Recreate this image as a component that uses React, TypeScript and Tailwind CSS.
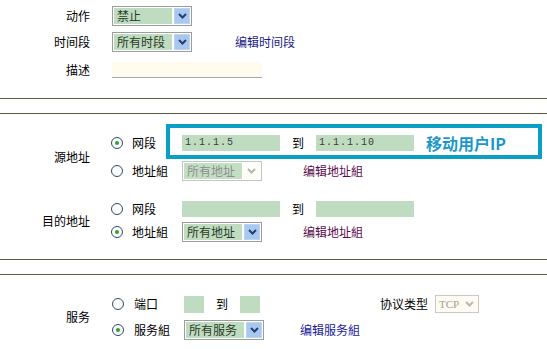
import React from 'react';

const FONT = { fontFamily: '"Noto Sans CJK SC", "Liberation Sans", sans-serif' };

function Chevron({ color }: { color: string }) {
  return (
    <svg width="9" height="6" viewBox="0 0 9 6">
      <path d="M1 1 L4.5 4.5 L8 1" fill="none" stroke={color} strokeWidth="2" />
    </svg>
  );
}

function Select({ text, w, disabled }: { text: string; w: string; disabled?: boolean }) {
  if (disabled) {
    return (
      <div className={`${w} h-[20px] flex border border-[#c4c4c4] bg-white p-px`}>
        <div className="flex-1 bg-[#c3dec3] pl-[3px] text-[#8e8e8e] leading-[16px]">{text}</div>
        <div className="w-[17px] ml-px flex items-center justify-center bg-[#fdfcf6]">
          <Chevron color="#b4b4b4" />
        </div>
      </div>
    );
  }
  return (
    <div className={`${w} h-[20px] flex border border-[#9c9c9c] bg-white p-px`}>
      <div className="flex-1 bg-[#c0dcc0] pl-[3px] text-[#2a3a2a] leading-[16px]">{text}</div>
      <div className="w-[16px] ml-[2px] flex items-center justify-center bg-[#a8c8f0] border border-[#bcd4f4]">
        <Chevron color="#24406c" />
      </div>
    </div>
  );
}

function Radio({ checked }: { checked?: boolean }) {
  return (
    <span className="w-[12px] h-[12px] rounded-full border border-[#2a4a6a] bg-white flex items-center justify-center shrink-0">
      {checked && <span className="w-[4px] h-[4px] rounded-full bg-[#2ea02e]" />}
    </span>
  );
}

function Field({ w, value }: { w: string; value?: string }) {
  return (
    <div
      className={`${w} h-[16px] bg-[#c0dcc0] pl-[3px] text-[10px] leading-[16px] text-[#3c3c3c] tracking-[1px]`}
      style={{ fontFamily: '"Liberation Mono", monospace' }}
    >
      {value}
    </div>
  );
}

function Line() {
  return <div className="h-px bg-[#5c5c3e]" />;
}

export default function App() {
  return (
    <div className="relative w-[547px] h-[349px] overflow-hidden bg-white text-[12px] text-black" style={FONT}>
      <div className="pt-[6px]">
        <div className="flex items-center h-[20px]">
          <div className="w-[90px] text-right">动作</div>
          <div className="ml-[22px]"><Select text="禁止" w="w-[80px]" /></div>
        </div>
        <div className="flex items-center h-[20px] mt-[6px]">
          <div className="w-[90px] text-right">时间段</div>
          <div className="ml-[22px]"><Select text="所有时段" w="w-[80px]" /></div>
          <span className="ml-[43px] text-[#1a1a8c]">编辑时间段</span>
        </div>
        <div className="flex items-center h-[16px] mt-[10px]">
          <div className="w-[90px] text-right">描述</div>
          <div className="ml-[22px] w-[150px] h-[16px] bg-[#fffbef] border-b border-[#a8a8a8]" />
        </div>
      </div>

      <div className="mt-[20px]"><Line /></div>
      <div className="mt-[14px]"><Line /></div>

      <div className="flex pt-[19px]">
        <div className="w-[90px] text-right self-center">源地址</div>
        <div className="ml-[21px] flex flex-col gap-[8px]">
          <div className="flex items-center h-[20px]">
            <div className="w-[71px] flex items-center gap-[9px]"><Radio checked /><span>网段</span></div>
            <Field w="w-[98px]" value="1.1.1.5" />
            <span className="ml-[12px]">到</span>
            <div className="ml-[12px]"><Field w="w-[98px]" value="1.1.1.10" /></div>
            <span className="ml-[12px] text-[16px] font-bold text-[#1a98c8]">移动用户IP</span>
          </div>
          <div className="flex items-center h-[20px]">
            <div className="w-[71px] flex items-center gap-[9px]"><Radio /><span>地址組</span></div>
            <Select text="所有地址" w="w-[80px]" disabled />
            <span className="ml-[41px] text-[#5a0c4c]">编辑地址組</span>
          </div>
        </div>
      </div>

      <div className="flex mt-[18px]">
        <div className="w-[90px] text-right self-center">目的地址</div>
        <div className="ml-[21px] flex flex-col gap-[3px]">
          <div className="flex items-center h-[20px]">
            <div className="w-[71px] flex items-center gap-[9px]"><Radio /><span>网段</span></div>
            <Field w="w-[98px]" />
            <span className="ml-[12px]">到</span>
            <div className="ml-[12px]"><Field w="w-[98px]" /></div>
          </div>
          <div className="flex items-center h-[20px]">
            <div className="w-[71px] flex items-center gap-[9px]"><Radio checked /><span>地址組</span></div>
            <Select text="所有地址" w="w-[80px]" />
            <span className="ml-[41px] text-[#5a0c4c]">编辑地址組</span>
          </div>
        </div>
      </div>

      <div className="mt-[17px]"><Line /></div>
      <div className="mt-[14px]"><Line /></div>

      <div className="flex pt-[19px]">
        <div className="w-[90px] text-right self-center">服务</div>
        <div className="ml-[22px] flex flex-col gap-[6px]">
          <div className="flex items-center h-[20px]">
            <div className="w-[72px] flex items-center gap-[10px]"><Radio /><span>端口</span></div>
            <div className="w-[20px] h-[17px] bg-[#c0dcc0]" />
            <span className="ml-[12px]">到</span>
            <div className="ml-[12px] w-[20px] h-[17px] bg-[#c0dcc0]" />
            <span className="ml-[120px]">协议类型</span>
            <div className="ml-[7px] w-[44px] h-[18px] flex border border-[#c8c8c8] bg-[#fffbf0]">
              <div className="flex-1 pl-[3px] text-[11px] leading-[16px] text-[#a0a0a0]" style={{ fontFamily: '"Liberation Serif", serif' }}>TCP</div>
              <div className="w-[17px] flex items-center justify-center"><Chevron color="#b8b8b8" /></div>
            </div>
          </div>
          <div className="flex items-center h-[20px]">
            <div className="w-[72px] flex items-center gap-[10px]"><Radio checked /><span>服务組</span></div>
            <Select text="所有服务" w="w-[80px]" />
            <span className="ml-[36px] text-[#1a1a9c]">编辑服务組</span>
          </div>
        </div>
      </div>

      <div className="absolute left-[166px] top-[124px] w-[376px] h-[35px] border-4 border-[#0aa0c6] pointer-events-none" />
    </div>
  );
}
